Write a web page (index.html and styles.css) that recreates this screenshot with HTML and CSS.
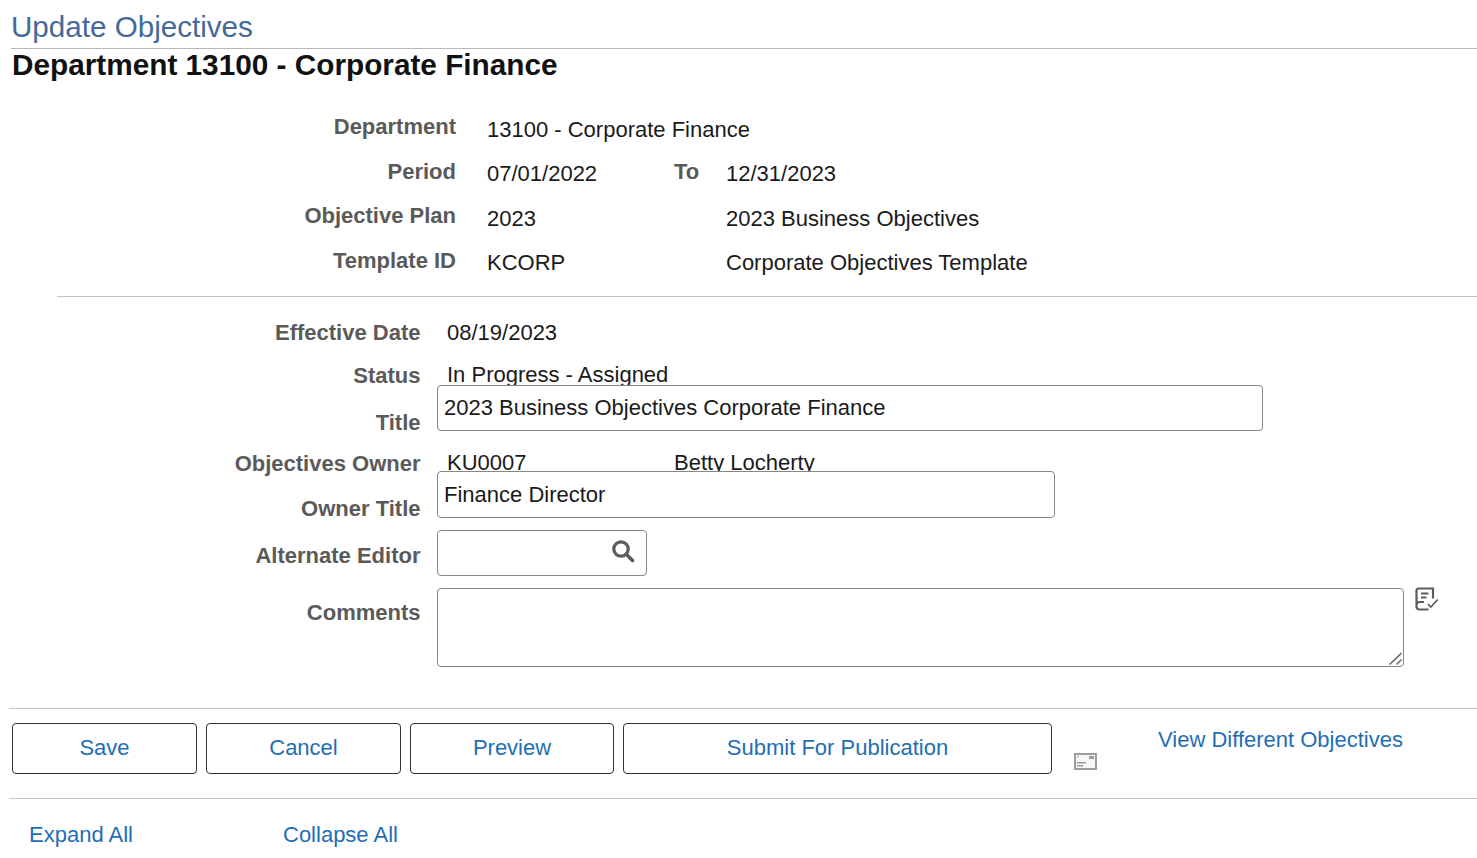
FILE: index.html
```html
<!DOCTYPE html>
<html lang="en">
<head>
<meta charset="utf-8">
<title>Update Objectives</title>
<link rel="stylesheet" href="styles.css">
</head>
<body>
<header class="page-head">
  <h1 class="page-title">Update Objectives</h1>
  <h2 class="dept-title">Department 13100 - Corporate Finance</h2>
</header>

<section class="summary">
  <div class="label">Department</div><div class="value wide">13100 - Corporate Finance</div>
  <div class="label">Period</div><div class="value">07/01/2022</div><div class="label">To</div><div class="value second">12/31/2023</div>
  <div class="label">Objective Plan</div><div class="value">2023</div><div></div><div class="value second">2023 Business Objectives</div>
  <div class="label">Template ID</div><div class="value">KCORP</div><div></div><div class="value second">Corporate Objectives Template</div>
</section>

<section class="details">
  <div class="row row-effective"><div class="flabel">Effective Date</div><div class="ftext">08/19/2023</div></div>
  <div class="row row-status"><div class="flabel">Status</div><div class="ftext">In Progress - Assigned</div></div>
  <div class="row row-title"><div class="flabel low">Title</div><input class="field field-title" type="text" value="2023 Business Objectives Corporate Finance"></div>
  <div class="row row-owner"><div class="flabel">Objectives Owner</div><div class="ftext owner-id">KU0007</div><div class="ftext">Betty Locherty</div></div>
  <div class="row row-ownertitle"><div class="flabel low">Owner Title</div><input class="field field-owner" type="text" value="Finance Director"></div>
  <div class="row row-alt"><div class="flabel">Alternate Editor</div>
    <div class="lookup"><input class="field field-alt" type="text">
      <svg class="search-icon" viewBox="0 0 24 24" width="24" height="24" aria-hidden="true"><circle cx="10" cy="10" r="7.200" fill="none" stroke="#5c5c5c" stroke-width="3.200"/><path d="M15.500 15.500l6 6" stroke="#5c5c5c" stroke-width="3.600" stroke-linecap="round"/></svg>
    </div>
  </div>
  <div class="row row-comments"><div class="flabel">Comments</div>
    <div class="comment-box">
      <textarea class="comments"></textarea>
      <svg class="grip" viewBox="0 0 14 13" width="14" height="13" aria-hidden="true"><path d="M0.500 12.500l12-11.500M7.500 12.500l5-5" fill="none" stroke="#555" stroke-width="1.200"/><path d="M2 12.800L13 2.300M9 12.800l4-4" fill="none" stroke="#ddd" stroke-width="0.800"/></svg>
    </div>
    <svg class="spell-icon" viewBox="0 0 24 24" width="24" height="24" aria-hidden="true"><path d="M18 11.500V1.500H3.500A2 2 0 0 0 1.500 3.500V19.500a3 3 0 0 0 3 3h9M1.500 18a3 3 0 0 1 3-3H9M6 6.500h7.500M6 10.500h5.500" fill="none" stroke="#5c5c5c" stroke-width="2.200"/><path d="M13 17l2.800 3 7-7.500" fill="none" stroke="#5c5c5c" stroke-width="1.800"/></svg>
  </div>
</section>

<section class="actions">
  <button class="btn btn-save" type="button">Save</button>
  <button class="btn btn-cancel" type="button">Cancel</button>
  <button class="btn btn-preview" type="button">Preview</button>
  <button class="btn btn-submit" type="button">Submit For Publication</button>
  <svg class="notify-icon" viewBox="0 0 23 17" width="23" height="17" aria-hidden="true"><rect x="1" y="1" width="21" height="15" fill="#f7f7f7" stroke="#9c9c9c" stroke-width="2"/><rect x="15" y="3" width="5" height="3" fill="#9c9c9c"/><rect x="3" y="3" width="2" height="1.500" fill="#b0b0b0"/><rect x="3" y="9" width="9" height="1.500" fill="#9c9c9c"/><rect x="3" y="12" width="6" height="1.500" fill="#9c9c9c"/></svg>
  <a class="link link-view" href="#">View Different Objectives</a>
</section>

<nav class="expanders">
  <a class="link link-expand" href="#">Expand All</a>
  <a class="link" href="#">Collapse All</a>
</nav>
</body>
</html>
```
FILE: styles.css
```css
html, body { margin: 0; padding: 0; background: #fff; }
body {
  width: 1477px;
  height: 858px;
  overflow: hidden;
  font-family: "Liberation Sans", Arial, sans-serif;
  font-size: 22px;
  line-height: 25px;
  color: #1a1a1a;
}
.page-head { margin-left: 11px; }
.page-title {
  margin: 0;
  height: 48px;
  box-sizing: content-box;
  font-size: 29.600px;
  line-height: 54px;
  font-weight: 400;
  color: #44699b;
  border-bottom: 1px solid #b8b8b8;
}
.dept-title {
  margin: 0;
  padding-left: 1px;
  font-size: 29.760px;
  line-height: 31px;
  font-weight: 700;
  color: #111;
}
.summary {
  display: grid;
  grid-template-columns: 456px 218px 24px 1fr;
  grid-auto-rows: 44.600px;
  margin-top: 37px;
  height: 179px;
}
.label {
  text-align: right;
  font-weight: 700;
  color: #5a5a5a;
  margin-top: -3px;
  white-space: nowrap;
}
.value { padding-left: 31px; margin-top: -0.400px; height: 26px; white-space: nowrap; }
.value.wide { grid-column: 2 / 5; }
.value.second { padding-left: 28px; }
.details {
  margin-left: 57px;
  border-top: 1px solid #c4c4c0;
  padding-top: 23px;
}
.row {
  display: flex;
  align-items: flex-start;
}
.flabel {
  flex: none;
  width: 363.500px;
  margin-right: 16.500px;
  text-align: right;
  font-weight: 700;
  color: #5a5a5a;
  white-space: nowrap;
}
.flabel.low { margin-top: 25px; }
.ftext { padding-left: 10px; white-space: nowrap; }
.owner-id { width: 217px; }
.row-effective { height: 44px; }
.row-status { height: 21px; }
.row-status .flabel { margin-top: -1px; }
.row-status .ftext { margin-top: -2px; }
.row-title { height: 46px; margin-bottom: 21px; }
.row-owner { height: 19px; }
.row-owner .flabel { margin-top: -1px; }
.row-owner .ftext { margin-top: -2px; }
.row-ownertitle { height: 47px; margin-bottom: 12px; }
.row-alt { height: 46px; margin-bottom: 12px; }
.row-alt .flabel { margin-top: 13px; }
.row-comments .flabel { margin-top: 12px; }
.row-comments { height: 79px; }
.field {
  box-sizing: border-box;
  height: 100%;
  border: 1px solid #8a8680;
  border-radius: 4px;
  padding: 0 6px;
  background: #fff;
  font: inherit;
  color: #1a1a1a;
  outline: none;
}
.field-title { width: 826px; }
.field-owner { width: 618px; }
.lookup { position: relative; height: 100%; width: 210px; }
.field-alt { width: 210px; }
.search-icon { position: absolute; right: 12px; top: 9px; }
.comment-box { position: relative; width: 967px; height: 79px; flex: none; }
.comments {
  display: block;
  box-sizing: border-box;
  width: 967px;
  height: 79px;
  border: 1px solid #8a8680;
  border-radius: 4px;
  padding: 6px;
  background: #fff;
  font: inherit;
  outline: none;
  resize: none;
}
.grip { position: absolute; right: 1px; bottom: 2px; pointer-events: none; }
.spell-icon { margin-left: 11px; margin-top: -1px; flex: none; }
.actions {
  margin: 41px 0 0 9px;
  height: 91px;
  box-sizing: border-box;
  padding: 14px 0 0 3px;
  display: flex;
  align-items: flex-start;
  border-top: 1px solid #c4c4c0;
  border-bottom: 1px solid #c4c4c0;
}
.btn {
  box-sizing: border-box;
  height: 51px;
  margin-right: 9px;
  background: #fff;
  border: 1px solid #333;
  border-radius: 4px;
  padding: 0 0 2px;
  font: inherit;
  color: #1f6eb5;
  cursor: pointer;
}
.btn-save { width: 185px; }
.btn-cancel { width: 195px; }
.btn-preview { width: 204px; }
.btn-submit { width: 429px; margin-right: 22px; }
.notify-icon { margin-top: 30px; flex: none; }
.link { color: #1f6eb5; text-decoration: none; white-space: nowrap; }
.link-view { margin-left: 61px; margin-top: 4px; }
.expanders {
  display: flex;
  padding: 23px 0 0 29px;
}
.link-expand { width: 254px; }
```
